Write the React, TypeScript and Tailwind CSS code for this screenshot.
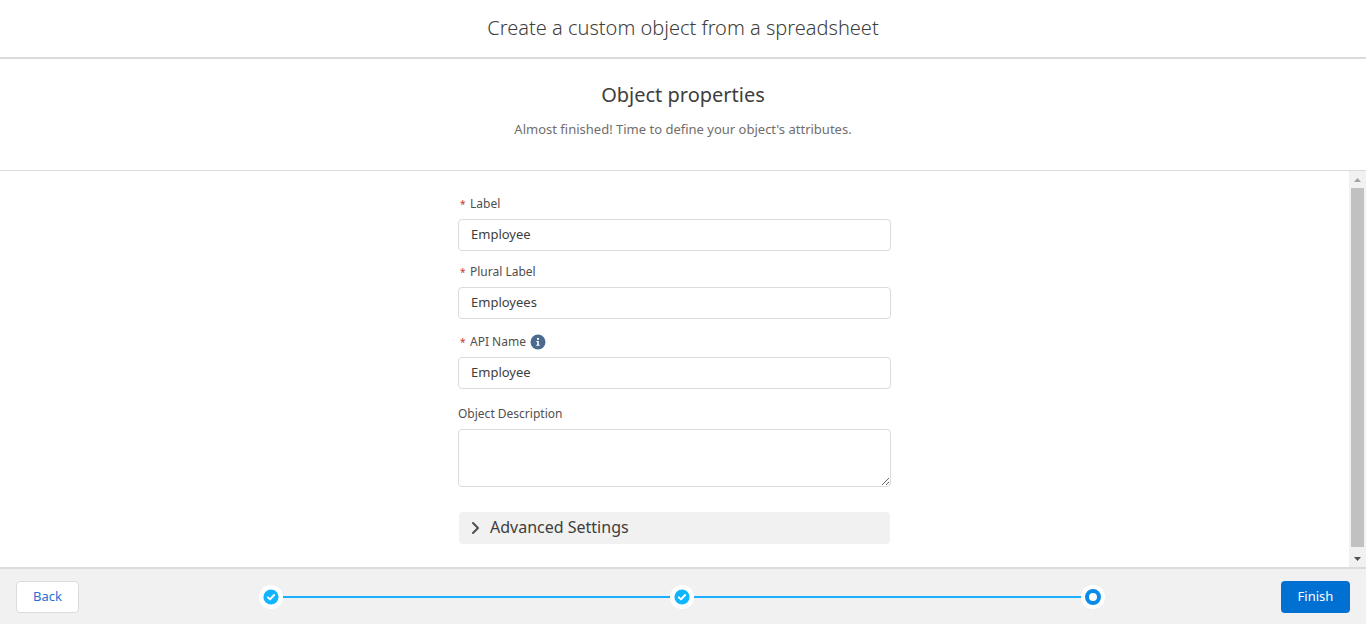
import React from 'react';

interface FieldProps {
  id: string;
  label: string;
  value: string;
  className?: string;
  children?: React.ReactNode;
}

const Field: React.FC<FieldProps> = ({ id, label, value, className = '', children }) => (
  <div className={className}>
    <div className="flex h-4 items-center">
      <label htmlFor={id} className="flex items-center text-xs leading-4 text-[#514f4d]">
        <span className="w-3 pl-0.5 text-[10px] text-[#c23934]" aria-hidden="true">*</span>
        {label}
      </label>
      {children}
    </div>
    <input
      id={id}
      type="text"
      required
      defaultValue={value}
      className="mt-[7px] block h-8 w-full rounded border border-[#dddbda] bg-white px-3 pb-0.5 text-[13px] text-[#3e3e3c] outline-none"
    />
  </div>
);

const InfoIcon = () => (
  <svg viewBox="0 0 16 16" className="size-4">
    <circle cx="8" cy="8" r="7.5" fill="#4b6a90" />
    <circle cx="8" cy="4.9" r="1.1" fill="#fff" />
    <path d="M6.4 7h2.4v3.7h.9v1H6.3v-1h.9V8h-.8z" fill="#fff" />
  </svg>
);

const DoneMarker = () => (
  <li className="flex size-6 shrink-0 items-center justify-center rounded-full bg-white">
    <svg viewBox="0 0 16 16" className="size-4" role="img" aria-label="Step completed">
      <circle cx="8" cy="8" r="7.6" fill="#0fb5ff" />
      <path d="M4.9 8.4l2.1 2 4.1-4.4" fill="none" stroke="#fff" strokeWidth="2" strokeLinecap="round" strokeLinejoin="round" />
    </svg>
  </li>
);

const Connector = () => <li aria-hidden="true" className="h-0.5 flex-1 bg-[#1ab0ff]" />;

export default function App() {
  return (
    <div className="flex h-screen flex-col bg-white font-['Noto_Sans',sans-serif] text-[#3e3e3c]">
      <header className="flex h-[59px] shrink-0 items-center justify-center border-b-2 border-[#dddbda] pb-0.5">
        <h1 className="text-xl leading-6 font-light">Create a custom object from a spreadsheet</h1>
      </header>

      <section className="shrink-0 border-b border-[#dddbda] pt-6 pb-[31px] text-center">
        <h2 className="text-xl leading-6">Object properties</h2>
        <p className="mt-3 text-[13px] leading-5 text-[#706e6b]">
          Almost finished! Time to define your object's attributes.
        </p>
      </section>

      <main className="flex min-h-0 flex-1">
        <div className="min-w-0 flex-1 overflow-hidden">
          <form className="mx-auto max-w-[433px] pt-[25px]">
            <Field id="label" label="Label" value="Employee" />
            <Field id="plural" label="Plural Label" value="Employees" className="mt-[13px]" />
            <Field id="api" label="API Name" value="Employee" className="mt-[15px]">
              <button type="button" aria-label="Help" className="ml-1">
                <InfoIcon />
              </button>
            </Field>
            <div className="mt-[17px]">
              <label htmlFor="description" className="block text-xs leading-4 text-[#514f4d]">Object Description</label>
              <textarea
                id="description"
                className="mt-[7px] block h-[58px] w-full resize-y rounded border border-[#dddbda] bg-white px-3 py-2 text-[13px] outline-none"
              />
            </div>
            <button
              type="button"
              aria-expanded="false"
              className="mx-px mt-[25px] flex h-8 w-[calc(100%-2px)] items-center rounded bg-[#f1f1f1] pb-0.5 pl-2.5 text-base leading-6"
            >
              <svg viewBox="0 0 12 14" className="mt-0.5 mr-[9px] h-3.5 w-3" fill="none" stroke="#514f4d" strokeWidth="2" strokeLinecap="round" strokeLinejoin="round">
                <path d="M4 2l5 5-5 5" />
              </svg>
              Advanced Settings
            </button>
          </form>
        </div>

        <div aria-hidden="true" className="flex w-[17px] shrink-0 flex-col items-center bg-[#f1f1f1]">
          <div className="flex h-[17px] items-center">
            <svg viewBox="0 0 7 4" className="h-1 w-[7px]" fill="#a3a3a3"><path d="M0 4L3.5 0 7 4z" /></svg>
          </div>
          <div className="flex-1">
            <div className="h-[99%] w-[13px] bg-[#c1c1c1]" />
          </div>
          <div className="flex h-4 items-center">
            <svg viewBox="0 0 7 4" className="h-1 w-[7px]" fill="#505050"><path d="M0 0L3.5 4 7 0z" /></svg>
          </div>
        </div>
      </main>

      <footer className="flex h-[57px] shrink-0 items-center border-t-2 border-[#dddbda] bg-[#f1f1f1] px-4">
        <button type="button" className="h-8 rounded border border-[#dddbda] bg-white px-4 text-[13px] text-[#2a6fd6]">
          Back
        </button>
        <ol className="mr-44 ml-[180px] flex flex-1 items-center">
          <DoneMarker />
          <Connector />
          <DoneMarker />
          <Connector />
          <li aria-current="step" className="flex size-6 shrink-0 items-center justify-center rounded-full bg-white">
            <span className="size-4 rounded-full border-4 border-[#0a8bea]" />
          </li>
        </ol>
        <button type="button" className="h-8 min-w-[69px] rounded bg-[#0070d2] px-4 text-[13px] text-white">
          Finish
        </button>
      </footer>
    </div>
  );
}
